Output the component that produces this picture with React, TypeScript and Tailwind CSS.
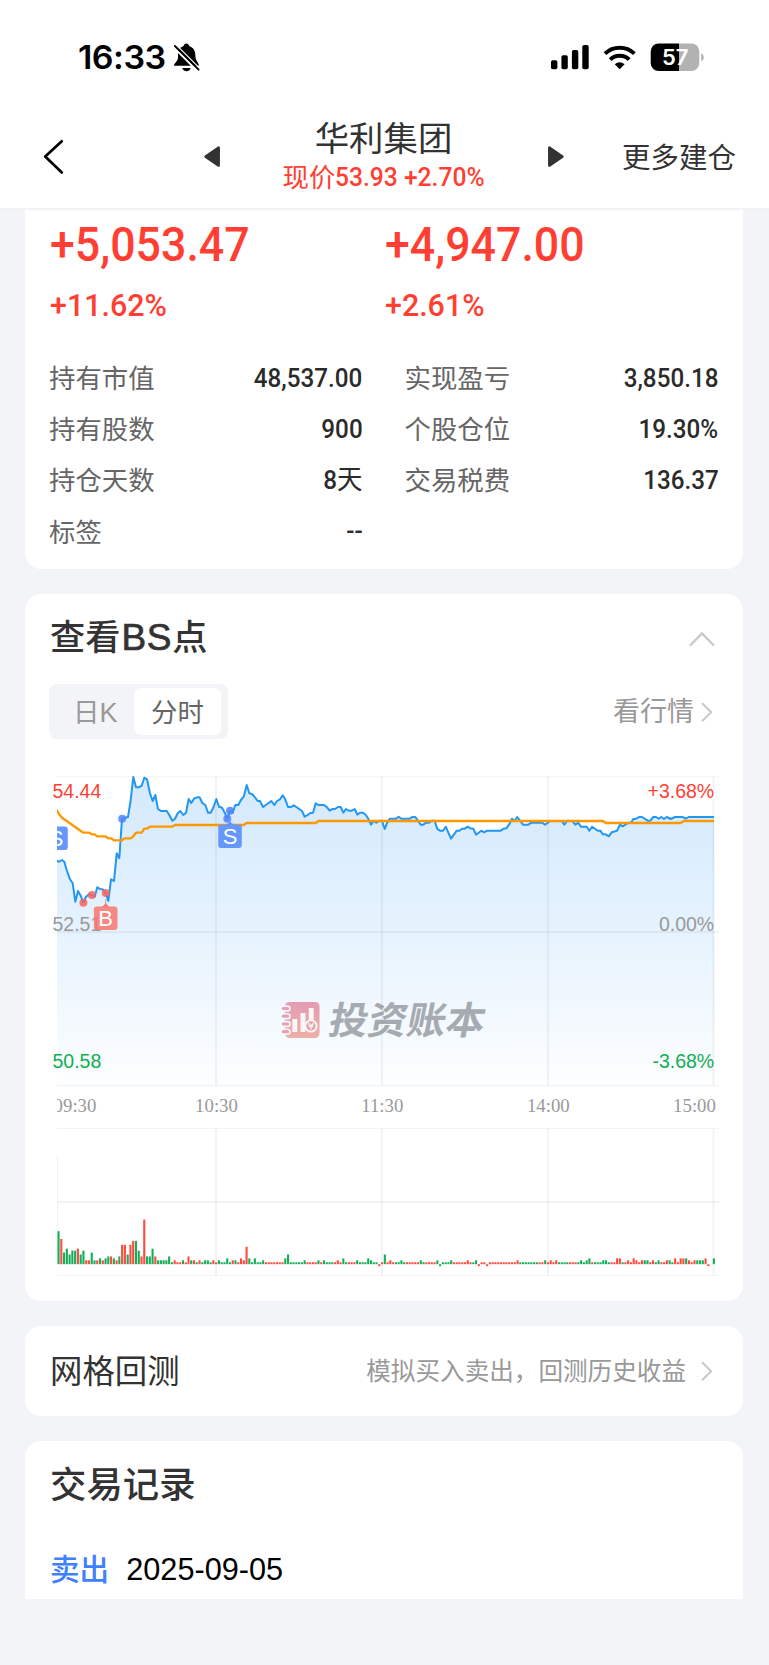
import React from "react";

const cjk = "font-['Noto_Sans_CJK_SC',sans-serif]";
const din = "font-['Roboto','Noto_Sans_CJK_SC',sans-serif]";

// Chart coordinates are in thirds of a pixel, measured from the plot's origin.
const PRICE_OPEN =
  "24,288 51,288 57,290 66,285 73,290 81,318 90,343 98,355 106,410 114,378 122,392 130,413 138,395 147,388 155,390 164,395 172,367 180,372 188,373 197,384 205,408 213,343 222,348 230,265 238,280 246,161 264,156 272,105 280,36 288,67 296,67 305,62 313,38 321,43 330,85 338,108 346,90 354,132 363,138 380,138 388,150 397,167 405,161 413,145 421,138 430,150 438,143 446,102 454,114 462,101 471,97 479,97 487,114 496,120 504,143 512,143 521,125 529,102 537,125 546,128 554,143 562,161 570,138 578,143 586,120 595,120 603,105 611,95 620,60 628,85 636,87 645,97 653,108";
const PRICE_REST =
  "0,108 9,126 17,120 26,114 34,108 43,120 51,108 60,103 68,91 76,103 84,126 93,126 101,121 109,126 126,138 134,155 143,150 151,144 159,143 167,115 175,120 192,120 200,126 209,137 217,132 225,132 234,126 242,126 250,143 258,132 267,137 275,137 284,132 292,149 300,143 309,143 317,149 325,161 333,179 341,167 349,173 358,167 366,167 374,192 382,172 390,161 408,161 416,155 424,161 449,161 457,156 466,156 474,167 482,179 490,179 499,173 507,173 516,167 524,167 532,192 540,197 549,197 557,185 573,221 590,197 598,197 606,191 614,191 623,185 631,190 640,191 648,209 664,197 672,202 681,197 722,197 731,191 739,190 747,179 756,161 764,167 772,156 789,179 805,179 814,173 847,173 855,179 871,168 905,168 913,179 922,167 937,168 946,179 955,173 963,185 980,185 988,197 996,185 1013,197 1021,197 1029,208 1037,208 1046,214 1055,202 1071,197 1080,179 1088,184 1105,173 1113,173 1120,162 1128,161 1137,156 1146,156 1163,167 1171,167 1180,156 1188,156 1196,161 1204,156 1212,162 1220,156 1232,162 1245,156 1268,156 1277,161 1286,156 1362,156";
const AVG_OPEN =
  "45,128 51,137 57,147 66,158 130,203 147,203 155,208 164,208 172,214 196,214 205,220 213,220 222,226 246,226 255,220 272,220 280,214 288,203 305,203 313,191 321,191 330,185 396,185 405,180 611,180 620,174";
const AVG_REST = "0,174 167,174 175,168 1029,168 1037,174 1262,174 1271,168 1362,168";

const toPoints = (s: string, originX: number) =>
  s.split(" ").map((p) => {
    const [x, y] = p.split(",").map(Number);
    return `${(originX + x / 3).toFixed(1)},${(765 + y / 3).toFixed(1)}`;
  });
const price = [...toPoints(PRICE_OPEN, 40), ...toPoints(PRICE_REST, 260)].join(" ");
const average = [...toPoints(AVG_OPEN, 40), ...toPoints(AVG_REST, 260)].join(" ");

// One token per minute: direction, then height; "*n" repeats it.
const VOLUME =
  "G17 R13 G6 G8 G5 G7*2 R8 G5 G7 R2*2 G6 G2 R2 G3 R2 G3 G4 R4 G3 R2 G4 R10*2 G5 R10 R12 G12 G7 R4 R23 G4*2 G8 R4 G2*4 G4 G1 R2 R1*2 G2 R1 R4 G2 R2 G1 R2 G1 G2*2 G1 R2 R1 G2 G1*2 G3 G1 R2 G2 R1 R3 R2 R9 G3 G1 G3 G1*2 G2 R1*7 G3 G5 G1*5 G2 R1*4 G2 R1 G2 G1*3 R1 R2 R1 G3 G1 R1*3 G2 G1*3 G3 G2 G1*2 R-1 R1 " +
  "G5 R1 R2 R1 G1*2 G2 G1 R1*5 G2 G1 R1*4 G2 G-1 G1*3 G2 R1*5 R2 R1 G1 G2 R-1 R1*2 R-1 R1*10 R2 G1*7 R1*2 G2 R1 R2 R1 R2 G1*4 R1*3 G1 G2 G1 G2 G3 R1 G1*3 G2*2 G1 R1*2 R3*2 G1 R1 R2 R1 R3 R2 R1 R2 G2*2 R1 R2 G1 G2 R1*2 R2 G2 G1 R3 R1 R3*2 G3 R2 R1 R2 G2*3 R3 R-1 R0 G3";
const volume = VOLUME.split(" ").flatMap((t) => {
  const [v, n] = t.slice(1).split("*");
  return Array.from({ length: Number(n ?? 1) }, () => ({ up: t[0] === "R", h: Number(v) * 1.94 }));
});

function Chevron({ className }: { className?: string }) {
  return (
    <svg className={className} width="12" height="20" viewBox="0 0 12 20" fill="none" stroke="#c8c8c8" strokeWidth="1.9" strokeLinecap="round" strokeLinejoin="round">
      <path d="M1.5 1.7 10.2 10.2 1.5 18.7" />
    </svg>
  );
}

function StatusBar() {
  return (
    <div className="flex h-[110px] items-start pt-[42px] pl-[78px]">
      <div className="h-[31px] w-[95px] font-['Inter',sans-serif] text-[33px] leading-[31px] font-semibold text-black">
        <span className="inline-block origin-left scale-x-[1.03] tracking-[-0.5px] whitespace-nowrap">16:33</span>
      </div>
      <svg width="28" height="31" viewBox="173 42 28 31">
        <path d="M174 65.8C174 63 178 61.2 178 57.5V54.5C178 50.2 180 47.2 183.4 46.2 184 44.4 185 43.6 186.4 43.6 187.8 43.6 188.8 44.4 189.4 46.2 193 47.2 195.3 50.5 195.3 55 195.3 60.8 198.9 62.7 198.9 65.8Z" />
        <path d="M182.2 68H190.8C189.9 70.3 188.3 71.3 186.5 71.3 184.7 71.3 183.1 70.3 182.2 68Z" />
        <path d="M175 48.4 198 71.4" stroke="#fff" strokeWidth="2.2" />
        <path d="M176.5 45.2 199.5 68.2" stroke="#fff" strokeWidth="1.2" />
        <path d="M174.9 46 198.6 69.7" stroke="#000" strokeWidth="1.9" strokeLinecap="round" />
      </svg>
      <svg className="ml-[348px]" width="160" height="31" viewBox="549 42 160 31">
        <rect x="551" y="60.3" width="6.4" height="9" rx="1.8" />
        <rect x="561.4" y="55.3" width="6.4" height="14" rx="1.8" />
        <rect x="571.9" y="50" width="6.4" height="19.3" rx="1.8" />
        <rect x="582.3" y="45" width="6.4" height="24.3" rx="1.8" />
        <g fill="none" stroke="#000" strokeWidth="4">
          <path d="M605 53.6A21.2 21.2 0 0 1 634.4 53.6" />
          <path d="M610.2 59.7A13.5 13.5 0 0 1 629.2 59.7" />
        </g>
        <path d="M619.7 69.2 614.8 64.2A7.2 7.2 0 0 1 624.6 64.2Z" />
        <clipPath id="battery"><rect x="650.7" y="43.4" width="48.6" height="27.6" rx="8" /></clipPath>
        <g clipPath="url(#battery)">
          <rect x="650" y="43" width="29" height="29" />
          <rect x="679" y="43" width="21" height="29" fill="#b2b2b2" />
        </g>
        <path d="M701.2 53.2Q703.8 54.2 703.8 57.2 703.8 60.2 701.2 61.2Z" fill="#b2b2b2" />
        <text x="675.2" y="65" textAnchor="middle" textLength="26.5" lengthAdjust="spacingAndGlyphs" className="fill-white font-['Inter',sans-serif] text-[21.5px] font-semibold">57</text>
      </svg>
    </div>
  );
}

function NavBar() {
  return (
    <div className="flex h-[100px] items-start border-b-2 border-[#f1f2f5] text-[#333]">
      <svg className="mt-[28px] ml-[42px]" width="24" height="38" viewBox="42 138 24 38" fill="none" stroke="#000" strokeWidth="2.7" strokeLinecap="round" strokeLinejoin="round">
        <path d="M61.8 141.3 45.2 156.5 61.8 172.5" />
      </svg>
      <svg className="mt-[35px] ml-[138px]" width="16" height="24" viewBox="0 0 16 24" fill="#333" stroke="#333" strokeWidth="2.5" strokeLinejoin="round">
        <path d="M1.6 11.6 14.7 2.6V20.6Z" />
      </svg>
      <div className="flex flex-1 flex-col items-center pr-[1px]">
        <div className={`${cjk} mt-[4px] h-[44px] text-[34.4px] leading-[44px]`}>华利集团</div>
        <div className={`${cjk} mt-[2px] flex h-[32px] text-[26.4px] leading-[32px] text-[#ff3f34]`}>
          <span>现价</span>
          <span className={`${din} w-[149px] text-[26.2px] leading-[34px] font-medium`}>
            <span className="inline-block origin-left scale-x-[0.94] whitespace-nowrap">53.93 +2.70%</span>
          </span>
        </div>
      </div>
      <svg className="mt-[35px]" width="16" height="24" viewBox="0 0 16 24" fill="#333" stroke="#333" strokeWidth="2.5" strokeLinejoin="round">
        <path d="M14.4 11.6 1.3 2.6V20.6Z" />
      </svg>
      <div className={`${cjk} mt-[28px] w-[205px] pl-[58px] text-[28.5px] leading-[36px]`}>更多建仓</div>
    </div>
  );
}

function Row({ label, value, unit }: { label: string; value: string; unit?: string }) {
  return (
    <div className="flex h-[51.3px] items-center justify-between">
      <span className={`${cjk} mt-[-3px] text-[26.4px] text-[#666]`}>{label}</span>
      <span className={`${din} inline-block origin-right scale-x-[0.925] text-[26.2px] font-medium text-[#2b2b2b]`}>
        {value}
        {unit && <span className="text-[27.5px] leading-none font-normal">{unit}</span>}
      </span>
    </div>
  );
}

function Summary() {
  return (
    <section className="h-[359.2px] rounded-b-[16px] bg-white pl-[24px]">
      <div className={`${din} grid grid-cols-[335px_1fr] font-medium text-[#ff3f34]`}>
        {[["+5,053.47", "+11.62%"], ["+4,947.00", "+2.61%"]].map(([amount, pct]) => (
          <div key={amount} className="pl-[0.5px]">
            <div className="mt-[6px] h-[58px] origin-left scale-x-[0.912] text-[49px] leading-[58px]">{amount}</div>
            <div className="mt-[11px] h-[40px] origin-left scale-x-[0.95] text-[32px] leading-[40px]">{pct}</div>
          </div>
        ))}
      </div>
      <div className="mt-[27.5px] grid grid-cols-[313.5px_314px] gap-x-[42px]">
        <Row label="持有市值" value="48,537.00" />
        <Row label="实现盈亏" value="3,850.18" />
        <Row label="持有股数" value="900" />
        <Row label="个股仓位" value="19.30%" />
        <Row label="持仓天数" value="8" unit="天" />
        <Row label="交易税费" value="136.37" />
        <Row label="标签" value="--" />
      </div>
    </section>
  );
}

function Grid({ top, mid, bottom }: { top: number; mid: number; bottom: number }) {
  return (
    <g stroke="#5a6478" strokeOpacity="0.08" strokeWidth="2">
      {[216, 382, 548, 713.5].map((x) => <path key={x} d={`M${x} ${top}V${bottom}`} />)}
      <path d={`M57 ${mid}H719`} />
      <path d={`M57 ${top}H719M57 ${bottom}H719`} strokeWidth="1" />
    </g>
  );
}

function Marker({ x, y, label, fill }: { x: number; y: number; label: string; fill: string }) {
  return (
    <g>
      <rect x={x - 11.8} y={y} width="23.6" height="23.4" rx="3" fill={fill} />
      <text x={x} y={y + 19.2} textAnchor="middle" fill="#fff" className="font-['Liberation_Sans',sans-serif] text-[22px]">{label}</text>
    </g>
  );
}

function Watermark() {
  return (
    <g>
      <rect x="285" y="1002" width="34.5" height="36" rx="4.5" fill="url(#brand)" />
      {[1008.5, 1016.2, 1024, 1031.7].map((y) => (
        <g key={y} fill="none">
          <rect x="282" y={y - 2} width="7.5" height="4" rx="2" stroke="#f3f8fe" strokeWidth="2.6" />
          <rect x="281.8" y={y - 1.6} width="7.4" height="3.2" rx="1.6" fill="#e6a0b0" />
        </g>
      ))}
      <g fill="#fbf5f8">
        <rect x="292.3" y="1019" width="5" height="13" />
        <rect x="300.5" y="1013" width="5" height="19" />
        <rect x="308.7" y="1008" width="5" height="14" />
        <circle cx="311" cy="1026" r="6.6" />
      </g>
      <circle cx="311" cy="1026" r="4.7" fill="#e9a5ae" />
      <path d="M308.4 1023.2 311 1026 313.6 1023.2M311 1026V1029.6M308.8 1026.3H313.2" stroke="#fbf5f8" strokeWidth="1.3" fill="none" />
      <text transform="translate(327 1034) skewX(-11)" textLength="156" lengthAdjust="spacingAndGlyphs" fill="#a6abb1" className="font-['Noto_Sans_CJK_SC',sans-serif] text-[38px] font-bold">投资账本</text>
    </g>
  );
}

function Chart() {
  return (
    <svg width="718" height="525" viewBox="25 765 718 525">
      <defs>
        <linearGradient id="area" gradientUnits="userSpaceOnUse" x1="0" y1="777" x2="0" y2="1086">
          <stop offset="0" stopColor="#d3e9fc" />
          <stop offset="0.5" stopColor="#e6f3fe" />
          <stop offset="1" stopColor="#fdfeff" />
        </linearGradient>
        <linearGradient id="brand" x1="0" y1="0" x2="0" y2="1">
          <stop offset="0" stopColor="#e39bb3" />
          <stop offset="1" stopColor="#edb0a4" />
        </linearGradient>
        <clipPath id="plot"><rect x="57" y="776" width="663" height="510" /></clipPath>
      </defs>
      <g clipPath="url(#plot)">
        <polygon points={`${price} 714,1085 48,1085`} fill="url(#area)" />
        <Watermark />
        <Grid top={776.8} mid={932} bottom={1085.6} />
        <Grid top={1128.5} mid={1202} bottom={1275.5} />
        <path d="M57.3 1155V1264" stroke="#e8f4ef" strokeWidth="1" />
        <polyline points={price} fill="none" stroke="#2196f3" strokeWidth="2" strokeLinejoin="round" />
        <polyline points={average} fill="none" stroke="#ff9800" strokeWidth="2.3" strokeLinejoin="round" />
      </g>
      <g className="font-['Liberation_Sans',sans-serif] text-[19.5px]">
        <text x="52.5" y="798" fill="#ff3f34">54.44</text>
        <text x="52.5" y="931" fill="#999">52.51</text>
        <text x="52.5" y="1067.7" fill="#11ae52">50.58</text>
        <g textAnchor="end">
          <text x="714.2" y="798" fill="#ff3f34">+3.68%</text>
          <text x="714.2" y="931" fill="#999">0.00%</text>
          <text x="714.2" y="1067.7" fill="#11ae52">-3.68%</text>
        </g>
      </g>
      <g clipPath="url(#plot)">
        <g fill="#f4645f" fillOpacity="0.85">
          <circle cx="83.4" cy="902.7" r="4" />
          <circle cx="91.8" cy="895" r="4" />
          <circle cx="105.7" cy="893" r="4" />
        </g>
        <g fill="#4f83fb" fillOpacity="0.85">
          <circle cx="122.2" cy="818.7" r="4" />
          <circle cx="227.3" cy="818.7" r="4" />
          <circle cx="230" cy="810.7" r="4" />
        </g>
        <path d="M105.7 899V905" stroke="#a9a9a9" strokeWidth="1" />
        <path d="M102 907 105.7 903 109.4 907Z" fill="#f87a74" />
        <path d="M226 825 230 821.5 234 825Z" fill="#5f93fc" />
        <Marker x={56} y={826.6} label="S" fill="#6698fc" />
        <Marker x={230} y={824.6} label="S" fill="#6698fc" />
        <Marker x={105.7} y={906.6} label="B" fill="#f87871e0" />
        <g fill="#999" textAnchor="middle" className="font-['Liberation_Serif',serif] text-[18.8px]">
          <text x="75" y="1111.5">09:30</text>
          <text x="216.5" y="1111.5">10:30</text>
          <text x="382.3" y="1111.5">11:30</text>
          <text x="548.3" y="1111.5">14:00</text>
          <text x="694.5" y="1111.5">15:00</text>
        </g>
        {volume.map(({ up, h }, i) => (
          <rect key={i} x={57.5 + i * 2.765} y={h < 0 ? 1264.2 : 1264.2 - h} width="2.1" height={Math.abs(h)} fill={up ? "#ff4a3f" : "#15ad58"} />
        ))}
      </g>
    </svg>
  );
}

export default function App() {
  return (
    <div className="h-[1665px] w-[769px] overflow-hidden bg-[#f3f4f7]">
      <header className="bg-white">
        <StatusBar />
        <NavBar />
      </header>
      <main className="mr-[26px] ml-[25px] flex flex-col gap-[24.7px]">
        <Summary />
        <section className="h-[707.5px] rounded-[16px] bg-white">
          <div className="flex h-[90.5px] items-center justify-between pr-[28px] pl-[25px]">
            <h2 className={`${cjk} mt-[-4px] flex items-baseline text-[35.2px] font-medium text-[#333]`}>
              查看
              <span className="ml-px font-['Liberation_Sans',sans-serif] text-[37px] tracking-[0.8px] [-webkit-text-stroke:0.7px_#333]">BS</span>
              点
            </h2>
            <svg width="26" height="16" viewBox="0 0 26 16" fill="none" stroke="#c8c8c8" strokeWidth="2.3" strokeLinecap="round" strokeLinejoin="round">
              <path d="M1.6 14 13 2.4 24.4 14" />
            </svg>
          </div>
          <div className="flex h-[55px] items-center justify-between pr-[30px] pl-[24px]">
            <div className={`${cjk} flex h-[55px] w-[179px] rounded-[8px] bg-[#f3f4f7] py-[4px] pl-[5px] text-[26.4px] leading-[45px]`}>
              <span className="w-[80px] pl-[19px] text-[#999]">日<span className="font-['Liberation_Sans',sans-serif] text-[27px]">K</span></span>
              <span className="w-[87px] rounded-[7px] bg-white text-center text-[#666]">分时</span>
            </div>
            <div className={`${cjk} flex items-center gap-[7px] text-[27px] text-[#999]`}>
              <span className="mt-[-3px]">看行情</span>
              <Chevron />
            </div>
          </div>
          <div className="mt-[26px]"><Chart /></div>
        </section>
        <section className="flex h-[90px] items-center justify-between rounded-[16px] bg-white pr-[30px] pl-[25px]">
          <h3 className={`${cjk} mt-[-3px] text-[32.4px] text-[#333]`}>网格回测</h3>
          <div className={`${cjk} flex items-center gap-[15px] text-[24.6px] text-[#999]`}>
            <span className="mt-[-4px]">模拟买入卖出，回测历史收益</span>
            <Chevron />
          </div>
        </section>
        <section className="h-[158.2px] rounded-t-[16px] bg-white pl-[25px]">
          <h2 className={`${cjk} h-[89px] text-[36.4px] leading-[82px] font-medium text-[#333]`}>交易记录</h2>
          <div className="flex h-[80px] items-center gap-[17px]">
            <span className={`${cjk} mt-[-3px] text-[29.6px] font-medium text-[#4080ff]`}>卖出</span>
            <span className="font-['Liberation_Sans',sans-serif] text-[30.7px] text-black">2025-09-05</span>
          </div>
        </section>
      </main>
    </div>
  );
}
